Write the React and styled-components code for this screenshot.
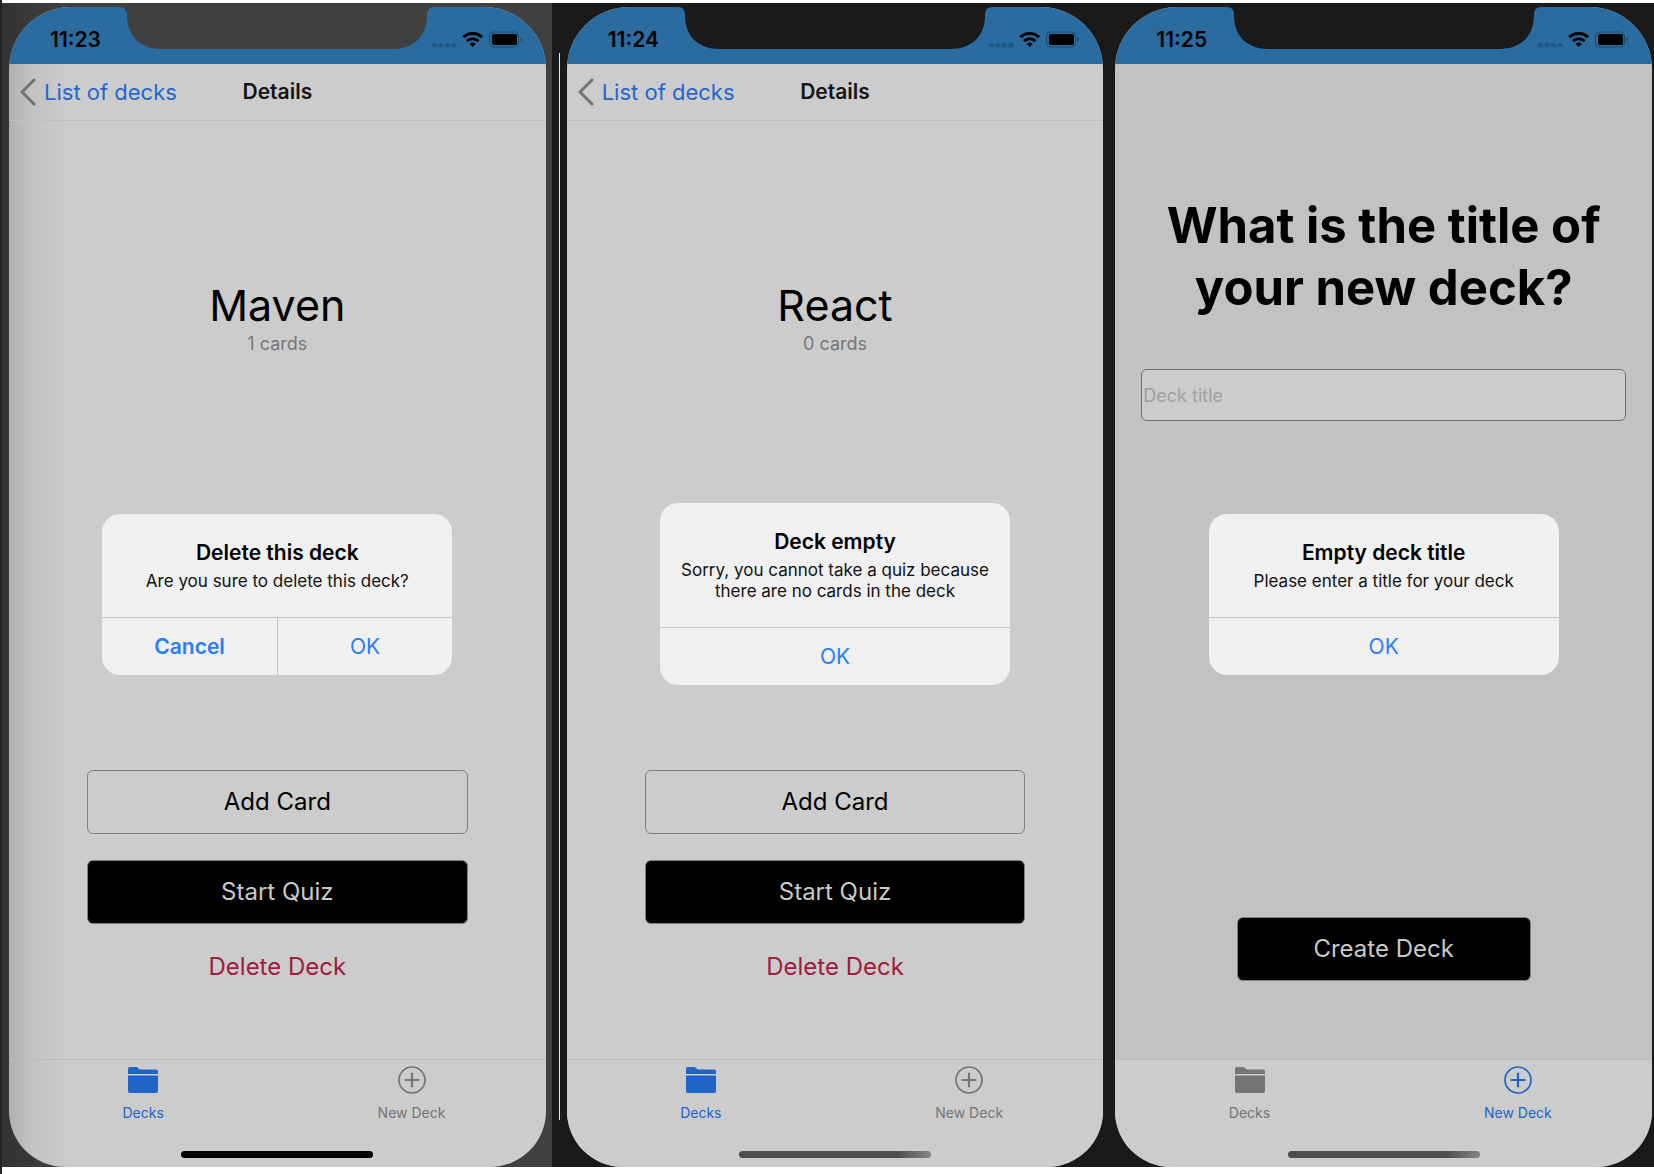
import React from "react";
import styled, { createGlobalStyle, css } from "styled-components";

const GlobalStyle = createGlobalStyle`
  *, *::before, *::after { box-sizing: border-box; }
  body {
    margin: 0;
    background: #ffffff;
    font-family: Inter, "Liberation Sans", sans-serif;
    color: #000000;
  }
  button, input { font: inherit; color: inherit; }
  button { cursor: pointer; }
  h1, h2, p { margin: 0; font-weight: 400; }
`;

const Stage = styled.main`
  display: flex;
  min-height: 100vh;
  padding: 3px 0 7px;
  border-left: 2px solid #262626;
`;

const backdrops = {
  grey: css`
    padding: 4px 6px 0 7px;
    background: linear-gradient(90deg, #333333, #404040 60px);
  `,
  seam: css`
    padding: 4px 6px 0 15px;
    background: linear-gradient(#e6e6e6, #e6e6e6) 7px 50px / 1px calc(100% - 97px) no-repeat, #1a1a1a;
  `,
  black: css`
    padding: 4px 2px 0 6px;
    background: #1a1a1a;
  `,
};

const Panel = styled.section`
  display: flex;
  flex: 1 1 0;
  box-sizing: content-box;
  min-width: 0;
  ${(p) => backdrops[p.$backdrop]}
`;

const Phone = styled.div`
  position: relative;
  display: flex;
  flex: 1;
  flex-direction: column;
  min-width: 0;
  overflow: hidden;
  border-radius: 62px 62px 56px 56px;
  background: ${(p) =>
    p.$shaded ? "linear-gradient(90deg, #b0b0b0, #c2c2c2 20px, #cccccc 64px)" : p.$dim ? "#c2c2c2" : "#cccccc"};
`;

const StatusBar = styled.header`
  display: grid;
  grid-template-columns: minmax(0, 1fr) auto minmax(0, 1fr);
  align-items: start;
  height: 57px;
  background: #2a6ca0;
`;

const Time = styled.time`
  padding: 20px 0 0 41px;
  font-size: 21px;
  line-height: 26px;
  font-weight: 600;
`;

const Notch = styled.svg`
  display: block;
  width: 314px;
  height: 42px;
  fill: ${(p) => p.$color};
`;

const StatusIcons = styled.div`
  display: flex;
  justify-content: flex-end;
  padding: 24px 22px 0 0;

  svg { display: block; flex: none; }
`;

const NavBar = styled.nav`
  display: grid;
  grid-template-columns: 1fr auto 1fr;
  align-items: center;
  height: 57px;
  padding: 0 11px;
  border-bottom: 1px solid #c0c0c0;
`;

const BackLink = styled.a`
  display: flex;
  align-items: center;
  gap: 8px;
  color: #2467cd;
  font-size: 22px;
  line-height: 28px;
  text-decoration: none;
  white-space: nowrap;
`;

const NavTitle = styled.h1`
  color: #141414;
  font-size: 21px;
  line-height: 28px;
  font-weight: 600;
`;

const DeckBody = styled.div`
  display: flex;
  flex: 1;
  flex-direction: column;
  align-items: center;
  padding: 156px 78px 75px;
`;

const DeckName = styled.h2`
  font-size: 43px;
  line-height: 56px;
  font-weight: 400;
`;

const CardCount = styled.p`
  color: #777777;
  font-size: 18px;
  line-height: 22px;
`;

const Actions = styled.div`
  display: flex;
  flex-direction: column;
  gap: 26px;
  width: 100%;
  margin-top: auto;
`;

const Button = styled.button`
  height: 64px;
  padding: 0;
  border: 1px solid #808080;
  border-radius: 6px;
  background: ${(p) => (p.$solid ? "#000000" : "transparent")};
  color: ${(p) => (p.$solid ? "#c9c9c9" : "#000000")};
  font-size: 24px;
  line-height: 32px;
`;

const DangerButton = styled.button`
  height: 34px;
  padding: 0;
  border: 0;
  background: transparent;
  color: #a01c3c;
  font-size: 24px;
  line-height: 32px;
`;

const FormBody = styled.form`
  display: flex;
  flex: 1;
  flex-direction: column;
  padding: 131px 26px 78px;
`;

const Question = styled.h1`
  font-size: 49px;
  line-height: 62px;
  font-weight: 700;
  text-align: center;
`;

const TitleInput = styled.input`
  width: 100%;
  height: 52px;
  margin-top: 50px;
  padding: 0 1px;
  border: 1px solid #6f6f6f;
  border-radius: 6px;
  background: #cccccc;
  font-size: 18px;

  &::placeholder { color: #a0a0a0; opacity: 1; }
`;

const CreateButton = styled(Button)`
  width: 294px;
  margin: auto auto 0;
`;

const TabBar = styled.nav`
  display: grid;
  grid-template-columns: 1fr 1fr;
  align-content: space-between;
  height: 108px;
  padding: 6px 0 9px;
  border-top: 1px solid #bbbbbb;
  background: ${(p) => (p.$shaded ? "transparent" : "#cccccc")};
`;

const Tab = styled.a`
  display: flex;
  flex-direction: column;
  align-items: center;
  gap: 9px;
  color: ${(p) => (p.$active ? "#2064c8" : "#757575")};
  font-size: 14px;
  line-height: 20px;
  text-decoration: none;

  svg { display: block; }
`;

const HomeIndicator = styled.div`
  grid-column: 1 / -1;
  justify-self: center;
  width: 192px;
  height: 7px;
  border-radius: 4px;
  background: ${(p) => (p.$muted ? "linear-gradient(90deg, #4c4c4c 82%, #858585)" : "#000000")};
`;

const Overlay = styled.div`
  position: absolute;
  inset: 14px 0 0;
  display: flex;
  align-items: center;
  justify-content: center;
`;

const Alert = styled.div`
  width: 350px;
  overflow: hidden;
  border-radius: 18px;
  background: #f0f0f0;
  text-align: center;
`;

const AlertText = styled.div`
  padding: 25px 16px;
`;

const AlertTitle = styled.h2`
  font-size: 21px;
  line-height: 28px;
  font-weight: 600;
`;

const AlertMessage = styled.p`
  padding-top: 4px;
  color: #111111;
  font-size: 17px;
  line-height: 21px;
`;

const AlertActions = styled.div`
  display: flex;
  border-top: 1px solid #c6c6c6;
`;

const AlertButton = styled.button`
  flex: 1;
  height: 57px;
  padding: 0;
  border: 0;
  background: transparent;
  color: #2a7dfa;
  font-size: 21px;
  font-weight: ${(p) => (p.$strong ? 600 : 400)};

  & + & { border-left: 1px solid #c6c6c6; }
`;

function SignalIcons() {
  return (
    <StatusIcons>
      <svg width="92" height="17" viewBox="0 0 92 17" aria-hidden="true">
        <g fill="#22577f">
          <rect x="0" y="12" width="5" height="4" rx="1" />
          <rect x="6.5" y="12" width="5" height="4" rx="1" />
          <rect x="13" y="12" width="5" height="4" rx="1" />
          <rect x="19.5" y="12" width="5" height="4" rx="1" />
        </g>
        <g fill="none" stroke="#000000" strokeWidth="3">
          <path d="M31.3 6.2a13.5 13.5 0 0 1 18.8 0" />
          <path d="M34.9 10.1a8.6 8.6 0 0 1 11.6 0" />
        </g>
        <path d="M37.6 12.8a4.9 4.9 0 0 1 6.2 0L40.7 16z" />
        <rect x="57.5" y="1" width="29" height="15" rx="4" fill="none" stroke="#1c4a6e" />
        <rect x="60" y="3" width="25" height="11" rx="2" />
        <path d="M88.5 6q3 2.5 0 5z" fill="#1c4a6e" />
      </svg>
    </StatusIcons>
  );
}

function StatusHeader({ time, notch }) {
  return (
    <StatusBar>
      <Time>{time}</Time>
      <Notch viewBox="0 0 314 42" $color={notch} aria-hidden="true">
        <path d="M0 0H314Q307 0 307 8C307 29 294 42 272 42H42C20 42 7 29 7 8Q7 0 0 0Z" />
      </Notch>
      <SignalIcons />
    </StatusBar>
  );
}

function FolderIcon() {
  return (
    <svg width="30" height="28" viewBox="0 0 30 28" fill="currentColor" aria-hidden="true">
      <path d="M0 8V3Q0 1 2 1H8Q9 1 10 2T12 3.500H28Q30 3.500 30 5.500V8Z" />
      <path d="M0 9.500H30V25Q30 27 28 27H2Q0 27 0 25Z" />
    </svg>
  );
}

function PlusCircleIcon() {
  return (
    <svg width="28" height="28" viewBox="0 0 28 28" fill="none" stroke="currentColor" aria-hidden="true">
      <circle cx="14" cy="14" r="13" strokeWidth="1.700" />
      <path d="M14 7.500V20.500M7.500 14H20.500" strokeWidth="2.200" strokeLinecap="round" />
    </svg>
  );
}

function Tabs({ active, shaded, muted }) {
  return (
    <TabBar $shaded={shaded} aria-label="Tabs">
      <Tab href="#decks" $active={active === "decks"}>
        <FolderIcon />
        Decks
      </Tab>
      <Tab href="#new" $active={active === "new"}>
        <PlusCircleIcon />
        New Deck
      </Tab>
      <HomeIndicator $muted={muted} />
    </TabBar>
  );
}

function AlertBox({ title, message, children }) {
  return (
    <Overlay>
      <Alert role="alertdialog" aria-label={title}>
        <AlertText>
          <AlertTitle>{title}</AlertTitle>
          <AlertMessage>{message}</AlertMessage>
        </AlertText>
        <AlertActions>{children}</AlertActions>
      </Alert>
    </Overlay>
  );
}

function DeckScreen({ time, notch, name, count, shaded, muted, children }) {
  return (
    <Phone $shaded={shaded}>
      <StatusHeader time={time} notch={notch} />
      <NavBar aria-label="Back">
        <BackLink href="#decks">
          <svg width="16" height="28" viewBox="0 0 16 28" fill="none" aria-hidden="true">
            <path d="M14 2L2 14L14 26" stroke="#737373" strokeWidth="3" strokeLinecap="round" strokeLinejoin="round" />
          </svg>
          List of decks
        </BackLink>
        <NavTitle>Details</NavTitle>
      </NavBar>
      <DeckBody>
        <DeckName>{name}</DeckName>
        <CardCount>{count} cards</CardCount>
        <Actions>
          <Button type="button">Add Card</Button>
          <Button type="button" $solid>Start Quiz</Button>
          <DangerButton type="button">Delete Deck</DangerButton>
        </Actions>
      </DeckBody>
      <Tabs active="decks" shaded={shaded} muted={muted} />
      {children}
    </Phone>
  );
}

export default function App() {
  return (
    <>
      <GlobalStyle />
      <Stage>
        <Panel $backdrop="grey">
          <DeckScreen time="11:23" notch="#404040" name="Maven" count={1} shaded>
            <AlertBox title="Delete this deck" message="Are you sure to delete this deck?">
              <AlertButton type="button" $strong>Cancel</AlertButton>
              <AlertButton type="button">OK</AlertButton>
            </AlertBox>
          </DeckScreen>
        </Panel>
        <Panel $backdrop="seam">
          <DeckScreen time="11:24" notch="#1a1a1a" name="React" count={0} muted>
            <AlertBox title="Deck empty" message="Sorry, you cannot take a quiz because there are no cards in the deck">
              <AlertButton type="button">OK</AlertButton>
            </AlertBox>
          </DeckScreen>
        </Panel>
        <Panel $backdrop="black">
          <Phone $dim>
            <StatusHeader time="11:25" notch="#1a1a1a" />
            <FormBody>
              <Question>What is the title of your new deck?</Question>
              <TitleInput type="text" placeholder="Deck title" aria-label="Deck title" />
              <CreateButton type="button" $solid>Create Deck</CreateButton>
            </FormBody>
            <Tabs active="new" muted />
            <AlertBox title="Empty deck title" message="Please enter a title for your deck">
              <AlertButton type="button">OK</AlertButton>
            </AlertBox>
          </Phone>
        </Panel>
      </Stage>
    </>
  );
}
